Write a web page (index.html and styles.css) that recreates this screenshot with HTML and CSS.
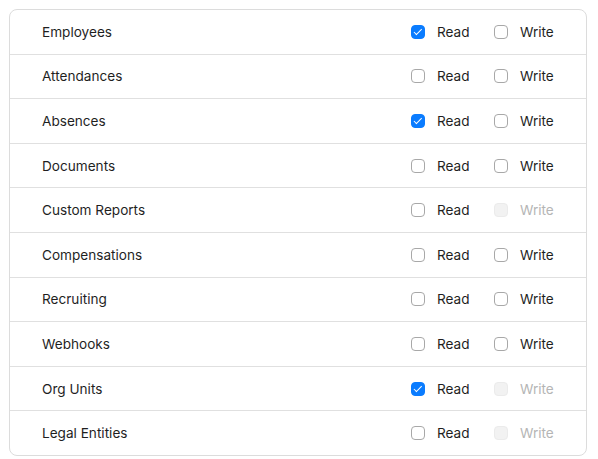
FILE: index.html
```html
<!DOCTYPE html>
<html>
<head>
<meta charset="utf-8">
<link rel="stylesheet" href="styles.css">
</head>
<body>
<div class="card">
  <div class="row"><span class="name">Employees</span><label class="opt"><span class="box checked"></span>Read</label><label class="opt"><span class="box"></span>Write</label></div>
  <div class="row"><span class="name">Attendances</span><label class="opt"><span class="box"></span>Read</label><label class="opt"><span class="box"></span>Write</label></div>
  <div class="row"><span class="name">Absences</span><label class="opt"><span class="box checked"></span>Read</label><label class="opt"><span class="box"></span>Write</label></div>
  <div class="row"><span class="name">Documents</span><label class="opt"><span class="box"></span>Read</label><label class="opt"><span class="box"></span>Write</label></div>
  <div class="row"><span class="name">Custom Reports</span><label class="opt"><span class="box"></span>Read</label><label class="opt disabled"><span class="box"></span>Write</label></div>
  <div class="row"><span class="name">Compensations</span><label class="opt"><span class="box"></span>Read</label><label class="opt"><span class="box"></span>Write</label></div>
  <div class="row"><span class="name">Recruiting</span><label class="opt"><span class="box"></span>Read</label><label class="opt"><span class="box"></span>Write</label></div>
  <div class="row"><span class="name">Webhooks</span><label class="opt"><span class="box"></span>Read</label><label class="opt"><span class="box"></span>Write</label></div>
  <div class="row"><span class="name">Org Units</span><label class="opt"><span class="box checked"></span>Read</label><label class="opt disabled"><span class="box"></span>Write</label></div>
  <div class="row"><span class="name">Legal Entities</span><label class="opt"><span class="box"></span>Read</label><label class="opt disabled"><span class="box"></span>Write</label></div>
</div>
</body>
</html>
```
FILE: styles.css
```css
html, body {
  margin: 0;
  padding: 0;
  background: #ffffff;
}
body {
  padding: 9px 11px 0 9px;
  font-family: Inter, "Noto Sans", sans-serif;
  font-size: 13.6px;
  color: #1f1f1f;
}
.card {
  border: 1px solid #dcdcdc;
  border-radius: 8px;
  overflow: hidden;
}
.row {
  display: grid;
  grid-template-columns: 1fr 83px 92px;
  align-items: center;
  height: 43.6px;
  padding-left: 32px;
  border-top: 1px solid #e0e0e0;
}
.row:first-child {
  border-top: none;
}
.opt {
  display: flex;
  align-items: center;
  gap: 12px;
}
.box {
  box-sizing: border-box;
  width: 14px;
  height: 14px;
  border: 1px solid #a8a8a8;
  border-radius: 4px;
  background: #ffffff;
  position: relative;
}
.box.checked {
  background: #0a7cff;
  border-color: #0a7cff;
}
.box.checked::after {
  content: "";
  position: absolute;
  left: 4px;
  top: 1.5px;
  width: 3px;
  height: 6.5px;
  border: solid #ffffff;
  border-width: 0 1.6px 1.6px 0;
  transform: rotate(45deg);
}
.opt.disabled {
  color: #b5b5b5;
}
.opt.disabled .box {
  background: #f2f2f2;
  border-color: #ebebeb;
}
```
